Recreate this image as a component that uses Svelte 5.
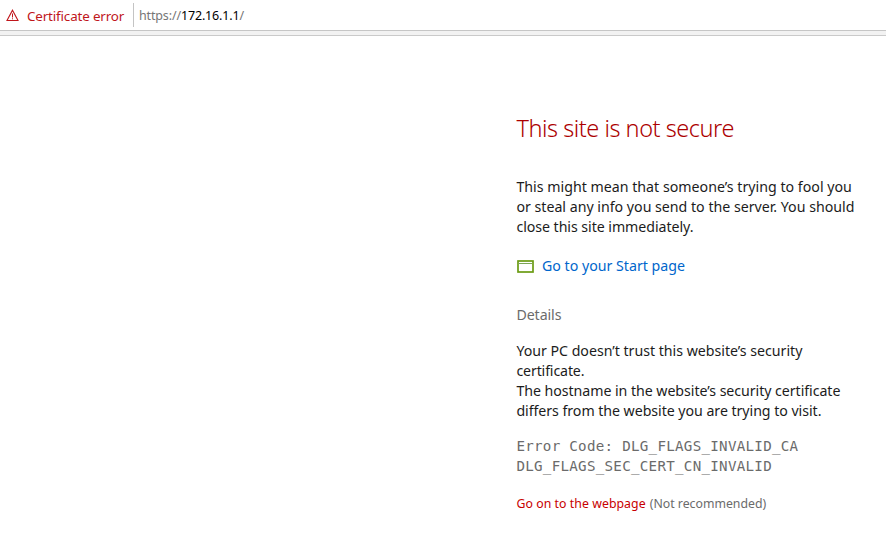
<script>
  // Adjusts tracking so that a line of text occupies the given width.
  function fit(node, width) {
    const natural = node.getBoundingClientRect().width;
    node.style.letterSpacing = `${(width - natural) / node.textContent.length}px`;
  }

  const warning = [
    ['This might mean that someone’s trying to fool you', 335.5],
    ['or steal any info you send to the server. You should', 338],
    ['close this site immediately.', 177]
  ];
  const reasons = [
    ['Your PC doesn’t trust this website’s security', 286],
    ['certificate.', 68],
    ['The hostname in the website’s security certificate', 324],
    ['differs from the website you are trying to visit.', 305]
  ];
  const codes = [
    ['Error Code: DLG_FLAGS_INVALID_CA', 282],
    ['DLG_FLAGS_SEC_CERT_CN_INVALID', 255.6]
  ];
</script>

<div class="page">
  <header>
    <svg class="alert" width="13" height="13" viewBox="0 0 13 13" fill="none" stroke="#c0161b">
      <path d="M6.5 1.2 12 11.5H1Z" stroke-width="1.1" />
      <path d="M6.5 4.5v4M6.5 9.3v1" />
    </svg>
    <div class="cert"><span use:fit={97.2}>Certificate error</span></div>
    <div class="sep"></div>
    <div class="url"><span use:fit={105}>https://<b>172.16.1.1</b>/</span></div>
  </header>
  <div class="strip"></div>

  <main>
    <h1><span use:fit={217.5}>This site is not secure</span></h1>
    <div class="warning">
      {#each warning as [text, width]}
        <div class="line"><span use:fit={width}>{text}</span></div>
      {/each}
    </div>
    <div class="start">
      <svg width="17" height="13" viewBox="0 0 17 13" fill="none" stroke="#6b9c13">
        <rect x="1" y="1" width="15" height="11" stroke-width="1.7" />
        <path d="M1.5 3.5h14" stroke="#7da657" />
      </svg>
      <a href="#start"><span use:fit={143}>Go to your Start page</span></a>
    </div>
    <div class="details line"><span use:fit={45}>Details</span></div>
    <div class="reasons">
      {#each reasons as [text, width]}
        <div class="line"><span use:fit={width}>{text}</span></div>
      {/each}
    </div>
    <div class="codes">
      {#each codes as [text, width]}
        <div class="line"><span use:fit={width}>{text}</span></div>
      {/each}
    </div>
    <div class="proceed">
      <a href="#proceed"><span use:fit={129.3}>Go on to the webpage</span></a>
      <span class="note" use:fit={116.5}>(Not recommended)</span>
    </div>
  </main>
</div>

<style>
  :global(body) {
    background: #fff;
  }
  .page {
    width: 886px;
    height: 542px;
    overflow: hidden;
    font-family: 'Noto Sans', 'Open Sans', sans-serif;
    font-size: 14.2px;
    color: #1c1c1c;
  }
  span {
    display: inline-block;
    white-space: pre;
  }
  header {
    height: 30px;
    display: flex;
    align-items: center;
    border-bottom: 1px solid #c6c6c6;
  }
  .alert {
    margin: 0 8px 0 6px;
    flex: none;
  }
  .cert {
    width: 106px;
    font-size: 13.4px;
    line-height: 30px;
    color: #c0161b;
    padding-top: 2px;
  }
  .sep {
    width: 1px;
    height: 24px;
    background: #c4c4c4;
    margin-right: 5px;
  }
  .url {
    font-size: 12.5px;
    color: #767676;
    padding-top: 1px;
  }
  .url b {
    font-weight: 400;
    color: #000;
  }
  .strip {
    height: 4px;
    background: #f2f2f2;
    border-bottom: 1px solid #cacaca;
  }
  main {
    padding: 76px 0 0 516.4px;
  }
  h1 {
    margin: 0;
    height: 32px;
    line-height: 32px;
    font-family: 'Noto Sans', 'Open Sans', sans-serif;
    font-size: 23.5px;
    font-weight: 300;
    color: #ac0000;
  }
  .line {
    height: 20px;
    line-height: 20px;
  }
  .warning {
    margin-top: 33px;
  }
  .start {
    display: flex;
    align-items: center;
    height: 20px;
    line-height: 20px;
    margin-top: 19px;
  }
  .start svg {
    margin: 1px 8px 0 0.6px;
  }
  a {
    text-decoration: none;
  }
  .start a {
    color: #0066cc;
  }
  .details {
    margin-top: 29px;
    color: #6b6b6b;
  }
  .reasons {
    margin-top: 16px;
  }
  .codes {
    margin-top: 15px;
    font-family: 'DejaVu Sans Mono', monospace;
    font-size: 14.2px;
    color: #6b6b6b;
  }
  .proceed {
    display: flex;
    gap: 4px;
    margin-top: 18px;
    height: 20px;
    line-height: 20px;
    font-size: 12.3px;
  }
  .proceed a {
    color: #c80000;
  }
  .note {
    color: #6b6b6b;
  }
</style>
